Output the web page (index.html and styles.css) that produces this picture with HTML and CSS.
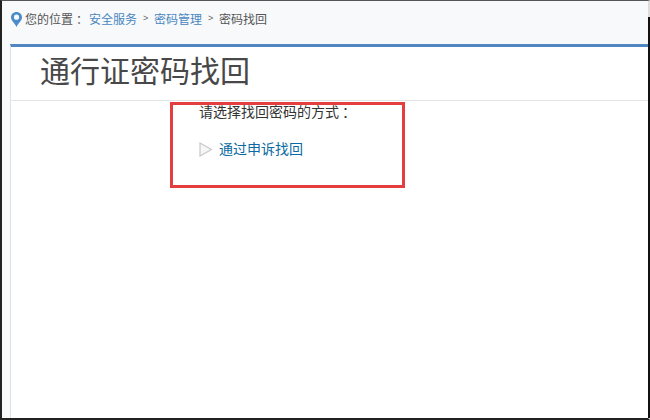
FILE: index.html
```html
<!DOCTYPE html>
<html lang="zh">
<head>
<meta charset="utf-8">
<title>通行证密码找回</title>
<link rel="stylesheet" href="styles.css">
</head>
<body>
<div class="frame">
  <nav class="crumbs">
    <svg class="pin" width="11" height="15" viewBox="0 0 11 15"><path d="M5.500 0C2.400 0 0 2.300 0 5.300c0 3.400 3.700 5.800 5.500 9.700 1.800-3.900 5.500-6.300 5.500-9.700C11 2.300 8.600 0 5.500 0z" fill="#4a8bc9"/><circle cx="5.500" cy="5.200" r="2.600" fill="#f7f9fb"/></svg>
    <span class="here">您的位置<span class="colon">：</span></span>
    <a class="crumb first">安全服务</a>
    <span class="sep">&gt;</span>
    <a class="crumb">密码管理</a>
    <span class="sep">&gt;</span>
    <span class="current">密码找回</span>
  </nav>
  <main class="panel">
    <h1 class="title">通行证密码找回</h1>
    <section class="content">
      <p class="prompt">请选择找回密码的方式<span class="colon">：</span></p>
      <div class="option">
        <svg class="arrow" width="14" height="15" viewBox="0 0 14 15"><path d="M1 1l11.500 6.500L1 14z" fill="#f6f6f6" stroke="#c8c8c8" stroke-width="1.200"/></svg>
        <a class="option-link">通过申诉找回</a>
      </div>
    </section>
  </main>
  <div class="highlight"></div>
  <div class="notch"></div>
</div>
</body>
</html>
```

FILE: styles.css
```css
* { box-sizing: border-box; }
html, body { margin: 0; padding: 0; }
body {
  width: 650px;
  height: 420px;
  overflow: hidden;
  background: #fff;
  font-family: "Liberation Sans", "Noto Sans CJK SC", sans-serif;
}
.frame {
  position: relative;
  width: 650px;
  height: 420px;
  display: flex;
  flex-direction: column;
  background: #f7f9fb;
  border-left: 2px solid #222;
  border-top: 1px solid #555;
  border-bottom: 2px solid #222;
  border-right: 2px solid #ddd;
}
.crumbs {
  height: 43px;
  flex: none;
  display: flex;
  align-items: center;
  padding: 0 0 9px 9px;
  font-size: 12px;
  color: #555;
}
.pin { flex: none; margin-right: 3px; margin-top: 3px; }
.here { width: 64px; white-space: nowrap; }
.colon { margin-left: 3px; }
.crumb { color: #4a86c0; }
.sep { width: 17px; text-align: center; font-size: 9px; color: #666; }
.current { color: #555; }
.panel {
  flex: 1;
  margin-left: 8px;
  background: #fff;
  border-top: 3px solid #5087c2;
  border-left: 1px solid #e2e2e2;
}
.title {
  margin: 0;
  height: 54px;
  padding-left: 29px;
  font-size: 30px;
  line-height: 50px;
  font-weight: 400;
  color: #484848;
  border-bottom: 1px solid #e5e5e5;
}
.content { padding: 2px 0 0 188px; }
.prompt {
  margin: 0;
  font-size: 14px;
  line-height: 18px;
  color: #333;
}
.option {
  display: flex;
  align-items: center;
  margin-top: 17px;
  height: 20px;
}
.arrow { flex: none; margin: 3px 6px 0 0; }
.option-link { font-size: 14px; color: #0a6aa1; }
.highlight {
  position: absolute;
  left: 168px;
  top: 101px;
  width: 235px;
  height: 86px;
  border: 3px solid #e53e3e;
}
.notch {
  position: absolute;
  right: -2px;
  top: 16px;
  bottom: 0;
  width: 2px;
  background: #111;
}
```
